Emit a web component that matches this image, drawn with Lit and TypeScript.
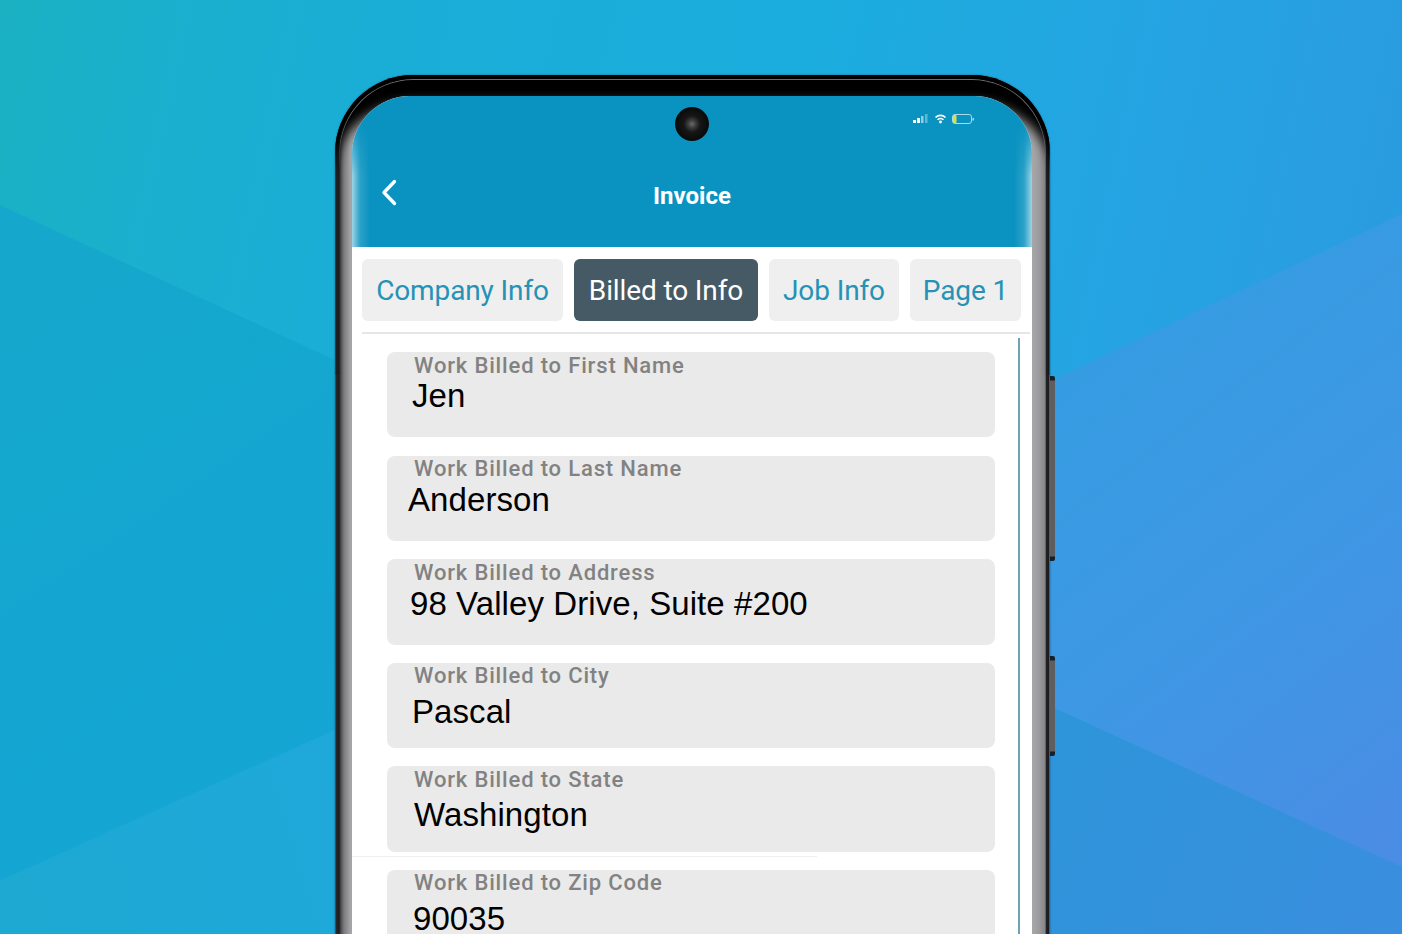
import { LitElement, html, css, svg } from "lit";
import { customElement } from "lit/decorators.js";

const fields = [
  { label: "Work Billed to First Name", value: "Jen", inset: 25, valueTop: 0 },
  { label: "Work Billed to Last Name", value: "Anderson", inset: 21, valueTop: 0 },
  { label: "Work Billed to Address", value: "98 Valley Drive, Suite #200", inset: 23, valueTop: 1 },
  { label: "Work Billed to City", value: "Pascal", inset: 25, valueTop: 5 },
  { label: "Work Billed to State", value: "Washington", inset: 27, valueTop: 5 },
  { label: "Work Billed to Zip Code", value: "90035", inset: 26, valueTop: 5 },
];
const tabs = [
  { name: "Company Info", w: 201, active: false },
  { name: "Billed to Info", w: 184, active: true },
  { name: "Job Info", w: 130, active: false },
  { name: "Page 1", w: 111, active: false },
];

@customElement("app-root")
export class AppRoot extends LitElement {
  static styles = css`
    :host { display: block; position: relative; width: 1402px; height: 934px; overflow: hidden; background: #1ba8da; }
    .bg { position: absolute; inset: 0; width: 100%; height: 100%; }
    .stage { position: relative; padding: 75px 0 0 335px; }
    .phone { position: relative; width: 715px; height: 900px; box-sizing: border-box; padding: 21px 18px 0 17px;
      border-radius: 78px 78px 0 0;
      box-shadow: 0 0 2px rgba(0,0,0,.45);
      background: linear-gradient(90deg, #6a6a6c 0, #2a2a2c 1px, #1c1c1e 4px, #4f4f51 6px, #7c7c7e 9px, #a2a2a4 15px, #a6a6a8 17px, #a6a6a8 698px, #9c9c9e 704px, #858587 710px, #222224 711.5px, #1c1c1e 713.5px, #77777a 715px); }
    .bezel { position: absolute; left: 0; right: 0; top: 0; height: 300px; border-radius: 78px 78px 0 0; pointer-events: none;
      box-shadow: inset 0 34px 12px -6px #000, inset 0 12px 4px -2px #000; }
    .bezel::after { content: ""; position: absolute; left: 4px; right: 4px; top: 4px; height: 90px; box-sizing: border-box;
      border: 1px solid rgba(170,170,172,.65); border-bottom: 0; border-radius: 74px 74px 0 0;
      -webkit-mask: linear-gradient(180deg, #000 40%, transparent 100%); mask: linear-gradient(180deg, #000 40%, transparent 100%); }
    .btn { position: absolute; right: -5px; width: 5px; border-radius: 0 2px 2px 0;
      background: linear-gradient(180deg, #16202a 0, #16202a 4px, #5e5e60 5px, #5e5e60 calc(100% - 5px), #16202a calc(100% - 4px), #16202a 100%); }
    .btn.a { top: 301px; height: 185px; }
    .btn.b { top: 581px; height: 100px; }
    .screen { position: relative; width: 680px; height: 879px; background: #fff; border-radius: 58px 58px 0 0; overflow: hidden; }
    header { position: relative; height: 151px; background: #0a93c0; box-sizing: border-box; display: flex; align-items: flex-start; justify-content: center; padding-top: 85px; }
    .glow { position: absolute; inset: 0; pointer-events: none;
      background: linear-gradient(90deg, rgba(255,255,255,.6) 0, rgba(255,255,255,.14) 8px, transparent 18px, transparent 662px, rgba(255,255,255,.14) 672px, rgba(255,255,255,.6) 680px);
      -webkit-mask: linear-gradient(180deg, transparent 25px, #000 80px); mask: linear-gradient(180deg, transparent 25px, #000 80px); }
    h1 { margin: 0; color: #fff; font: 700 24px/30px Roboto, sans-serif; position: relative; }
    .back { position: absolute; left: 28px; top: 83px; width: 20px; height: 30px; }
    .cam { position: absolute; left: 323px; top: 11px; width: 34px; height: 34px; border-radius: 50%;
      background: radial-gradient(circle at 50% 50%, #6a6a6a 0, #3d3d3d 16%, #161616 34%, #0b0b0b 66%, #1e1e1e 100%); }
    .status { position: absolute; left: 561px; top: 17px; width: 62px; height: 12px; }
    .tabs { display: flex; gap: 11px; padding: 12px 0 0 10px; height: 85px; box-sizing: border-box; }
    .tab { height: 62px; box-sizing: border-box; padding-top: 2px; border-radius: 6px; background: #efefef; color: #2592b6; display: flex; align-items: center; justify-content: center;
      font: 400 28px/32px Roboto, sans-serif; letter-spacing: -.12px; white-space: nowrap; }
    .tab.active { background: #455a64; color: #fff; }
    .rule { height: 2px; margin: 0 2px 0 10px; background: #e6e6e6; }
    .list { position: relative; padding: 18px 37px 0 35px; display: flex; flex-direction: column; gap: 18.2px; }
    .scroll { position: absolute; left: 666px; top: 4px; width: 1.5px; height: 700px; background: #6fa3b2; }
    .sep { position: absolute; left: 0; top: 522px; width: 465px; height: 1px; background: #f0f0f0; }
    .card { position: relative; height: 85.4px; flex: none; background: #eaeaea; border-radius: 8px; box-sizing: border-box; }
    .label { position: absolute; left: 27px; top: .5px; color: #828282; font: 500 22px/26px Roboto, sans-serif; letter-spacing: .84px; white-space: nowrap; }
    .value { position: absolute; top: 30px; color: #000; font: 400 33px/28px "Liberation Sans", Arial, sans-serif; letter-spacing: .08px; white-space: nowrap; }
  `;

  render() {
    return html`
      <svg class="bg" viewBox="0 0 1402 934" aria-hidden="true">
        ${svg`<defs>
          <linearGradient id="a" gradientUnits="userSpaceOnUse" x1="0" y1="0" x2="1402" y2="300">
            <stop offset="0" stop-color="#1ab1c2"/><stop offset=".1" stop-color="#1ab0cc"/><stop offset=".25" stop-color="#1aaed6"/><stop offset=".55" stop-color="#1badde"/><stop offset=".8" stop-color="#25a4e2"/><stop offset="1" stop-color="#2a9be0"/>
          </linearGradient>
          <linearGradient id="b" gradientUnits="userSpaceOnUse" x1="0" y1="300" x2="335" y2="800">
            <stop offset="0" stop-color="#15a8cc"/><stop offset="1" stop-color="#14a5d5"/>
          </linearGradient>
          <linearGradient id="c" gradientUnits="userSpaceOnUse" x1="0" y1="900" x2="335" y2="800">
            <stop offset="0" stop-color="#1da9d2"/><stop offset="1" stop-color="#1fa8da"/>
          </linearGradient>
          <linearGradient id="d" gradientUnits="userSpaceOnUse" x1="1050" y1="400" x2="1402" y2="860">
            <stop offset="0" stop-color="#369ce2"/><stop offset=".5" stop-color="#3f97e4"/><stop offset="1" stop-color="#4b8ce4"/>
          </linearGradient>
          <linearGradient id="e" gradientUnits="userSpaceOnUse" x1="1050" y1="760" x2="1402" y2="934">
            <stop offset="0" stop-color="#2e95da"/><stop offset="1" stop-color="#3a8ede"/>
          </linearGradient>
        </defs>
        <rect width="1402" height="934" fill="url(#a)"/>
        <polygon points="0,205 335,360 700,360 700,730 335,730 0,881" fill="url(#b)"/>
        <polygon points="0,881 335,730 700,730 700,934 0,934" fill="url(#c)"/>
        <polygon points="1050,381 1402,214 1402,867 1050,706" fill="url(#d)"/>
        <polygon points="1050,706 1402,867 1402,934 1050,934" fill="url(#e)"/>`}
      </svg>
      <div class="stage">
        <div class="phone">
          <div class="btn a"></div>
          <div class="btn b"></div>
          <div class="bezel"></div>
          <div class="screen">
            <header>
              <div class="glow"></div>
              <svg class="back" viewBox="0 0 20 30" fill="none" stroke="#fff" stroke-width="3.4" stroke-linecap="round" stroke-linejoin="round"><path d="M14.5 2.5 4 13.5 14.5 24.5"/></svg>
              <h1>Invoice</h1>
              <div class="cam"></div>
              <svg class="status" viewBox="0 0 62 12">
                <rect x="0" y="7" width="3" height="3" fill="#fff"/>
                <rect x="4" y="5" width="3" height="5" fill="#fff"/>
                <rect x="8" y="3" width="2.5" height="7" fill="#fff" opacity=".55"/>
                <rect x="12" y="1" width="2.5" height="9" fill="#fff" opacity=".35"/>
                <path d="M22.5 4.5a7 7 0 0 1 10 0M24.5 6.8a4 4 0 0 1 6 0" stroke="#fff" stroke-width="1.6" fill="none"/>
                <circle cx="27.5" cy="9" r="1.4" fill="#fff"/>
                <rect x="39.5" y="1.5" width="19" height="9" rx="2.5" fill="none" stroke="#a8dae9" stroke-width="1"/>
                <rect x="40" y="2" width="3.5" height="8" rx="1" fill="#d8e04a"/>
                <rect x="59.5" y="5" width="1.5" height="2.5" fill="#a8dae9"/>
              </svg>
            </header>
            <div class="tabs">
              ${tabs.map((t) => html`<div class="tab ${t.active ? "active" : ""}" style="width:${t.w}px">${t.name}</div>`)}
            </div>
            <div class="rule"></div>
            <div class="list">
              <div class="scroll"></div>
              <div class="sep"></div>
              ${fields.map((f) => html`<div class="card">
                <div class="label">${f.label}</div>
                <div class="value" style="left:${f.inset}px;margin-top:${f.valueTop}px">${f.value}</div>
              </div>`)}
            </div>
          </div>
        </div>
      </div>
    `;
  }
}
